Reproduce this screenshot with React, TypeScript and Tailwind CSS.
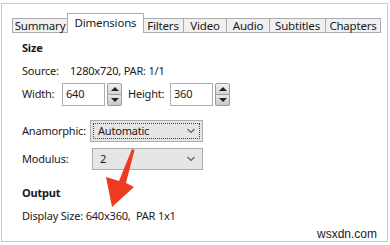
import React from "react";

const font = { fontFamily: '"Noto Sans", "Open Sans", sans-serif', letterSpacing: "-0.2px" };

const tabs = ["Summary", "Dimensions", "Filters", "Video", "Audio", "Subtitles", "Chapters"];
const tabWidths: Record<string, string> = {
  Summary: "w-[56px]",
  Dimensions: "w-[77px]",
  Filters: "w-[42px]",
  Video: "w-[44px]",
  Audio: "w-[44px]",
  Subtitles: "w-[57px]",
  Chapters: "w-[56px]",
};

function Spinner() {
  return (
    <div className="flex flex-col w-[15px] h-[23px] ml-[2px]">
      <div className="flex-1 flex items-center justify-center border border-[#9c9c9c] bg-gradient-to-b from-[#f2f2f2] to-[#d4d4d4] rounded-t-[2px]">
        <div className="w-0 h-0 border-l-[4px] border-r-[4px] border-b-[4px] border-l-transparent border-r-transparent border-b-[#222]" />
      </div>
      <div className="flex-1 flex items-center justify-center border border-t-0 border-[#9c9c9c] bg-gradient-to-b from-[#e8e8e8] to-[#c9c9c9] rounded-b-[2px]">
        <div className="w-0 h-0 border-l-[4px] border-r-[4px] border-t-[4px] border-l-transparent border-r-transparent border-t-[#222]" />
      </div>
    </div>
  );
}

function NumberBox({ value }: { value: string }) {
  return (
    <div className="flex items-center">
      <div className="w-[43px] h-[23px] border border-[#abadb3] bg-white flex items-center pl-[3px] text-[11px] text-[#1a1a1a]">
        {value}
      </div>
      <Spinner />
    </div>
  );
}

function Chevron() {
  return (
    <svg width="8" height="5" viewBox="0 0 8 5" className="absolute right-[7px] top-1/2 -translate-y-1/2">
      <path d="M0.5 0.5 L4 4 L7.5 0.5" fill="none" stroke="#606060" strokeWidth="1.2" />
    </svg>
  );
}

function Select({ value, focused, className }: { value: string; focused?: boolean; className: string }) {
  return (
    <div className={`relative h-[22px] border border-[#adadad] bg-[#e5e5e5] flex items-center ${className}`}>
      {focused && <div className="absolute inset-[2px] border border-dotted border-[#444]" />}
      <span className="pl-[7px] text-[11px] text-[#1a1a1a]">{value}</span>
      <Chevron />
    </div>
  );
}

export default function App() {
  return (
    <div className="relative w-[390px] h-[245px] bg-white overflow-hidden" style={font}>
      <div className="ml-[1px] mt-[3px] w-[387px] h-[239px] border border-[#c9c9c9] bg-white">
        {/* Tabs */}
        <div className="flex items-end pl-[11px] mt-[9px] h-[20px]">
          {tabs.map((t) =>
            t === "Dimensions" ? (
              <div
                key={t}
                className={`${tabWidths[t]} h-[20px] pb-[2px] border border-b-0 border-[#acacac] bg-white flex items-center justify-center text-[11.5px] text-[#1a1a1a] -mx-[1px] relative z-10`}
              >
                {t}
              </div>
            ) : (
              <div
                key={t}
                className={`${tabWidths[t]} h-[15px] border border-[#acacac] bg-[#f0f0f0] flex items-center justify-center text-[11.5px] text-[#1a1a1a] -ml-[1px]`}
              >
                {t}
              </div>
            )
          )}
        </div>

        {/* Content */}
        <div className="pl-[20px] text-[11px] text-[#1a1a1a]">
          <div className="mt-[7px] h-[16px] leading-[16px] font-bold">Size</div>

          <div className="mt-[7px] h-[16px] leading-[16px] flex">
            <span className="w-[48px]">Source:</span>
            <span>1280x720, PAR: 1/1</span>
          </div>

          <div className="mt-[4px] h-[23px] flex items-center">
            <span className="w-[40px]">Width:</span>
            <NumberBox value="640" />
            <span className="ml-[6px] w-[42px]">Height:</span>
            <NumberBox value="360" />
          </div>

          <div className="mt-[14px] flex items-center">
            <span className="w-[68px]">Anamorphic:</span>
            <Select value="Automatic" focused className="w-[113px]" />
          </div>

          <div className="mt-[6px] flex items-center">
            <span className="w-[70px]">Modulus:</span>
            <Select value="2" className="w-[111px]" />
          </div>

          <div className="mt-[15px] h-[16px] leading-[16px] font-bold">Output</div>

          <div className="mt-[7px] h-[16px] leading-[16px] whitespace-pre">Display Size: 640x360,  PAR 1x1</div>
        </div>
      </div>

      {/* Red arrow annotation */}
      <svg className="absolute left-0 top-0" width="390" height="245" viewBox="0 0 390 245">
        <polygon points="132,149 134.5,150 126,183 134,187 112,207 106,177 119,181" fill="#ee3a1f" />
      </svg>

      {/* Watermark */}
      <div
        className="absolute left-[317px] top-[226px] text-[12px] leading-[16px] text-[#222]"
        style={{ fontFamily: '"Liberation Sans", Arial, sans-serif', letterSpacing: "0" }}
      >
        wsxdn.com
      </div>
    </div>
  );
}
